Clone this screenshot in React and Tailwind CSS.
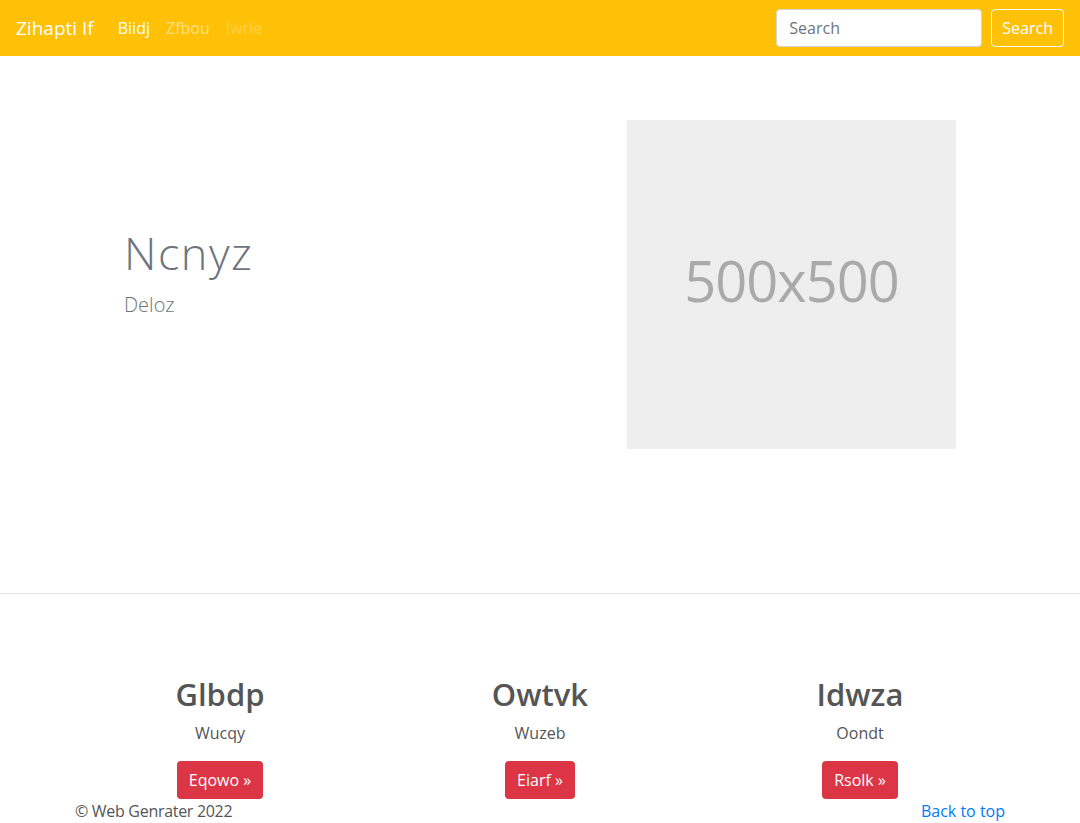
const features = [
  { title: 'Glbdp', text: 'Wucqy', cta: 'Eqowo' },
  { title: 'Owtvk', text: 'Wuzeb', cta: 'Eiarf' },
  { title: 'Idwza', text: 'Oondt', cta: 'Rsolk' },
]

export default function App() {
  return (
    <div className="min-h-screen bg-white font-['Open_Sans',sans-serif] text-[#212529]">
      <nav className="h-14 bg-[#ffc107] flex items-center justify-between px-4">
        <div className="flex items-center">
          <span className="text-[19px] text-white mr-4">Zihapti If</span>
          <a className="px-2 text-white">Biidj</a>
          <a className="px-2 text-white/50">Zfbou</a>
          <a className="px-2 text-white/25">Iwrle</a>
        </div>
        <div className="flex items-center">
          <input
            className="w-[206px] h-[38px] rounded bg-white border border-[#ced4da] px-3 text-base text-[#495057] placeholder:text-[#6c757d] outline-none"
            placeholder="Search"
          />
          <button className="ml-[9px] h-[38px] px-[10px] rounded border border-white text-white text-base">
            Search
          </button>
        </div>
      </nav>

      <section className="h-[538px] border-b border-[#e5e5e5] pt-16">
        <div className="flex">
          <div className="w-[627px] pl-[124px] pt-[110px]">
            <h1 className="text-[45px] leading-none tracking-[1.5px] font-light text-[#6c757d]">Ncnyz</h1>
            <p className="mt-[15px] text-xl leading-[30px] font-light text-[#6c757d]">Deloz</p>
          </div>
          <div className="w-[329px] h-[329px] bg-[#eeeeee] flex items-center justify-center">
            <span className="text-[56px] tracking-[-1px] mb-[10px] text-[#aaaaaa]">500x500</span>
          </div>
        </div>
      </section>

      <section className="w-[960px] ml-[60px] pt-[82px] grid grid-cols-3 text-center">
        {features.map((f) => (
          <div key={f.title} className="flex flex-col items-center">
            <h2 className="text-[31px] leading-[1.2] font-semibold text-[#555555]">{f.title}</h2>
            <p className="mt-2 text-base text-[#555555]">{f.text}</p>
            <button className="mt-4 h-[38px] px-3 rounded bg-[#dc3545] text-white text-base">
              {f.cta} »
            </button>
          </div>
        ))}
      </section>

      <footer className="w-[930px] ml-[75px] flex justify-between text-base leading-6">
        <span className="text-[#555555] tracking-[-0.3px]">© Web Genrater 2022</span>
        <a className="text-[#007bff]">Back to top</a>
      </footer>
    </div>
  )
}
